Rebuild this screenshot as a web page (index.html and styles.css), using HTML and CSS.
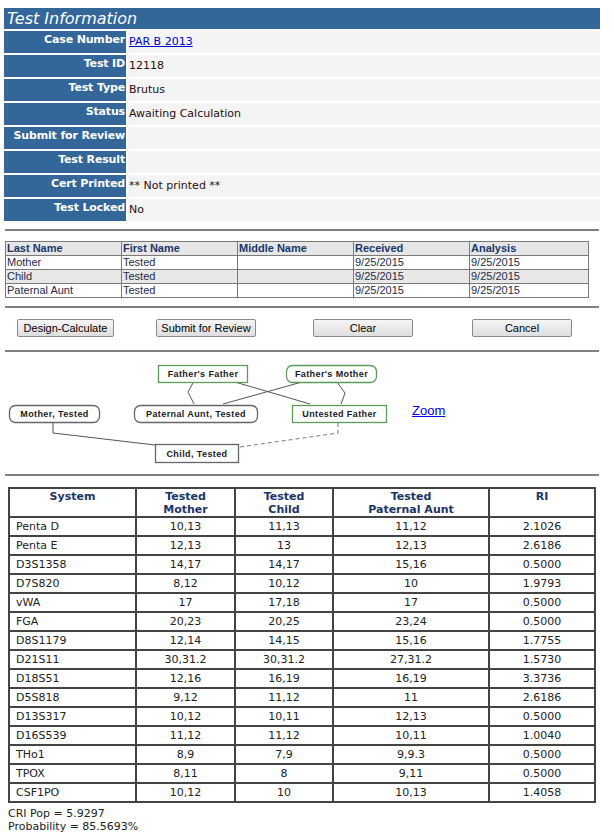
FILE: index.html
```html
<!DOCTYPE html>
<html>
<head>
<meta charset="utf-8">
<title>Test Information</title>
<link rel="stylesheet" href="styles.css">
</head>
<body>
<div class="page">
  <div class="title">Test Information</div>
  <div class="info">
    <div class="lbl">Case Number</div><div class="val"><a href="#">PAR B 2013</a></div>
    <div class="lbl">Test ID</div><div class="val">12118</div>
    <div class="lbl">Test Type</div><div class="val">Brutus</div>
    <div class="lbl">Status</div><div class="val">Awaiting Calculation</div>
    <div class="lbl">Submit for Review</div><div class="val"></div>
    <div class="lbl">Test Result</div><div class="val"></div>
    <div class="lbl">Cert Printed</div><div class="val">** Not printed **</div>
    <div class="lbl">Test Locked</div><div class="val">No</div>
  </div>

  <div class="rule r1"></div>

  <table class="people">
    <colgroup><col class="pc"><col class="pc"><col class="pc"><col class="pc"><col class="pc-last"></colgroup>
    <tr class="ph"><th>Last Name</th><th>First Name</th><th>Middle Name</th><th>Received</th><th>Analysis</th></tr>
    <tr><td>Mother</td><td>Tested</td><td></td><td>9/25/2015</td><td>9/25/2015</td></tr>
    <tr class="alt"><td>Child</td><td>Tested</td><td></td><td>9/25/2015</td><td>9/25/2015</td></tr>
    <tr><td>Paternal Aunt</td><td>Tested</td><td></td><td>9/25/2015</td><td>9/25/2015</td></tr>
  </table>

  <div class="rule r2"></div>

  <div class="buttons">
    <button class="btn b1" type="button">Design-Calculate</button>
    <button class="btn" type="button">Submit for Review</button>
    <button class="btn" type="button">Clear</button>
    <button class="btn" type="button">Cancel</button>
  </div>

  <div class="rule r3"></div>

  <div class="pedigree">
    <svg class="chart" width="400" height="116" viewBox="0 0 400 116" xmlns="http://www.w3.org/2000/svg">
      <g fill="none" stroke="#555" stroke-width="1">
        <polyline points="189,29 184,38 190,50"/>
        <line x1="231" y1="28" x2="306" y2="50"/>
        <line x1="298" y1="28" x2="219" y2="50"/>
        <polyline points="333,28 341,39 337,50"/>
        <polyline points="49,68 49,79 151,91"/>
        <polyline points="236,93 334,79 334,69" stroke="#777" stroke-dasharray="4,3"/>
      </g>
      <g fill="#fff" stroke-width="1.3">
        <rect x="154.5" y="11.5" width="89" height="17" stroke="#5d9b5d"/>
        <rect x="282.5" y="11.5" width="90" height="17" rx="6" stroke="#5d9b5d"/>
        <rect x="5.5" y="51.5" width="90" height="17" rx="6" stroke="#666"/>
        <rect x="130.5" y="51.5" width="123" height="17" rx="6" stroke="#666"/>
        <rect x="288.5" y="51.5" width="94" height="17" stroke="#5d9b5d"/>
        <rect x="151.5" y="90.5" width="83" height="18" stroke="#666"/>
      </g>
      <g class="node-text" text-anchor="middle">
        <text x="199" y="23">Father's Father</text>
        <text x="327.5" y="23">Father's Mother</text>
        <text x="50.5" y="63">Mother, Tested</text>
        <text x="192" y="63">Paternal Aunt, Tested</text>
        <text x="335.5" y="63">Untested Father</text>
        <text x="193" y="102.5">Child, Tested</text>
      </g>
    </svg>
    <a class="zoom" href="#">Zoom</a>
  </div>

  <div class="rule r4"></div>

  <table class="results">
    <colgroup><col class="c1"><col class="c2"><col class="c3"><col class="c4"><col class="c5"></colgroup>
    <tr><th>System</th><th>Tested<br>Mother</th><th>Tested<br>Child</th><th>Tested<br>Paternal Aunt</th><th>RI</th></tr>
    <tr><td>Penta D</td><td>10,13</td><td>11,13</td><td>11,12</td><td>2.1026</td></tr>
    <tr><td>Penta E</td><td>12,13</td><td>13</td><td>12,13</td><td>2.6186</td></tr>
    <tr><td>D3S1358</td><td>14,17</td><td>14,17</td><td>15,16</td><td>0.5000</td></tr>
    <tr><td>D7S820</td><td>8,12</td><td>10,12</td><td>10</td><td>1.9793</td></tr>
    <tr><td>vWA</td><td>17</td><td>17,18</td><td>17</td><td>0.5000</td></tr>
    <tr><td>FGA</td><td>20,23</td><td>20,25</td><td>23,24</td><td>0.5000</td></tr>
    <tr><td>D8S1179</td><td>12,14</td><td>14,15</td><td>15,16</td><td>1.7755</td></tr>
    <tr><td>D21S11</td><td>30,31.2</td><td>30,31.2</td><td>27,31.2</td><td>1.5730</td></tr>
    <tr><td>D18S51</td><td>12,16</td><td>16,19</td><td>16,19</td><td>3.3736</td></tr>
    <tr><td>D5S818</td><td>9,12</td><td>11,12</td><td>11</td><td>2.6186</td></tr>
    <tr><td>D13S317</td><td>10,12</td><td>10,11</td><td>12,13</td><td>0.5000</td></tr>
    <tr><td>D16S539</td><td>11,12</td><td>11,12</td><td>10,11</td><td>1.0040</td></tr>
    <tr><td>THo1</td><td>8,9</td><td>7,9</td><td>9,9.3</td><td>0.5000</td></tr>
    <tr><td>TPOX</td><td>8,11</td><td>8</td><td>9,11</td><td>0.5000</td></tr>
    <tr><td>CSF1PO</td><td>10,12</td><td>10</td><td>10,13</td><td>1.4058</td></tr>
  </table>

  <div class="summary">CRI Pop = 5.9297<br>Probability = 85.5693%</div>
</div>
</body>
</html>
```

FILE: styles.css
```css
html, body {
  margin: 0;
  padding: 0;
  background: #fff;
}

body {
  font-family: "DejaVu Sans", Verdana, sans-serif;
  font-size: 11px;
  color: #222;
}

.page {
  width: 596px;
  margin-left: 4px;
  padding-top: 8px;
}

.title {
  height: 21px;
  line-height: 21px;
  background: #336699;
  color: #fff;
  font-style: italic;
  font-size: 16px;
  padding-left: 3px;
}

.info {
  display: grid;
  grid-template-columns: 122px 1fr;
  grid-auto-rows: 22px;
  gap: 2px;
  margin-top: 2px;
}

.lbl {
  background: #336699;
  color: #fff;
  font-weight: bold;
  font-size: 11px;
  line-height: 13px;
  letter-spacing: -0.15px;
  text-align: right;
  padding: 2px 1px 0 0;
  white-space: nowrap;
}

.val {
  background: #f4f4f4;
  color: #2b0d0d;
  font-size: 11px;
  line-height: 22px;
  padding-left: 1px;
  white-space: nowrap;
}

.val a {
  color: #0000cc;
}

.rule {
  height: 2px;
  background: #808080;
  margin: 0 1px;
}

.r1 { margin-top: 8px; }
.r2 { margin-top: 8px; }
.r3 { margin-top: 13px; }
.r4 { margin-top: 0; }

.people {
  margin: 10px 0 0 1px;
  width: 583px;
  table-layout: fixed;
  border-collapse: collapse;
  font-family: "Liberation Sans", Arial, sans-serif;
  font-size: 11px;
  color: #1d2c4a;
}

.people .pc { width: 116px; }
.people .pc-last { width: 119px; }

.people th,
.people td {
  border: 1px solid #7a7a7a;
  height: 13px;
  line-height: 13px;
  padding: 0 1px;
  text-align: left;
  white-space: nowrap;
  overflow: hidden;
}

.people th {
  background: #e6e6e6;
  color: #17376b;
  font-weight: bold;
}

.people .alt td {
  background: #e8e8e8;
}

.buttons {
  display: grid;
  grid-template-columns: 139px 157px 159px auto;
  padding-left: 13px;
  margin-top: 11px;
}

.btn {
  width: 100px;
  height: 18px;
  padding: 0;
  margin: 0;
  justify-self: start;
  font-family: "Liberation Sans", Arial, sans-serif;
  font-size: 11px;
  color: #000;
  background: linear-gradient(#f5f5f5, #dedede);
  border: 1px solid #8a8a8a;
  border-radius: 2px;
}

.btn.b1 {
  width: 97px;
}

.pedigree {
  display: flex;
  align-items: flex-start;
  height: 122px;
}

.chart {
  display: block;
  margin-top: 2px;
  flex: none;
}

.node-text {
  font-family: "Liberation Sans", Arial, sans-serif;
  font-weight: bold;
  font-size: 9px;
  letter-spacing: 0.4px;
  fill: #1a1a1a;
}

.zoom {
  margin: 51px 0 0 8px;
  font-family: "Liberation Sans", Arial, sans-serif;
  font-size: 13px;
  line-height: 15px;
  color: #0000ee;
}

.results {
  margin: 11px 0 0 4px;
  width: 588px;
  table-layout: fixed;
  border-collapse: separate;
  border-spacing: 0;
  border: 1px solid #444;
  font-size: 11px;
  color: #222;
}

.results .c1 { width: 127px; }
.results .c2 { width: 99px; }
.results .c3 { width: 98px; }
.results .c4 { width: 156px; }
.results .c5 { width: 106px; }

.results th,
.results td {
  border: 1px solid #444;
  line-height: 13px;
  white-space: nowrap;
}

.results th {
  color: #1c3566;
  font-weight: bold;
  vertical-align: top;
  text-align: center;
  padding: 1px 2px 0;
  height: 26px;
}

.results td {
  padding: 2px 6px;
  text-align: center;
}

.results td:first-child {
  text-align: left;
}

.summary {
  margin-top: 4px;
  padding-left: 4px;
  font-size: 11px;
  line-height: 13px;
  color: #222;
}
```
